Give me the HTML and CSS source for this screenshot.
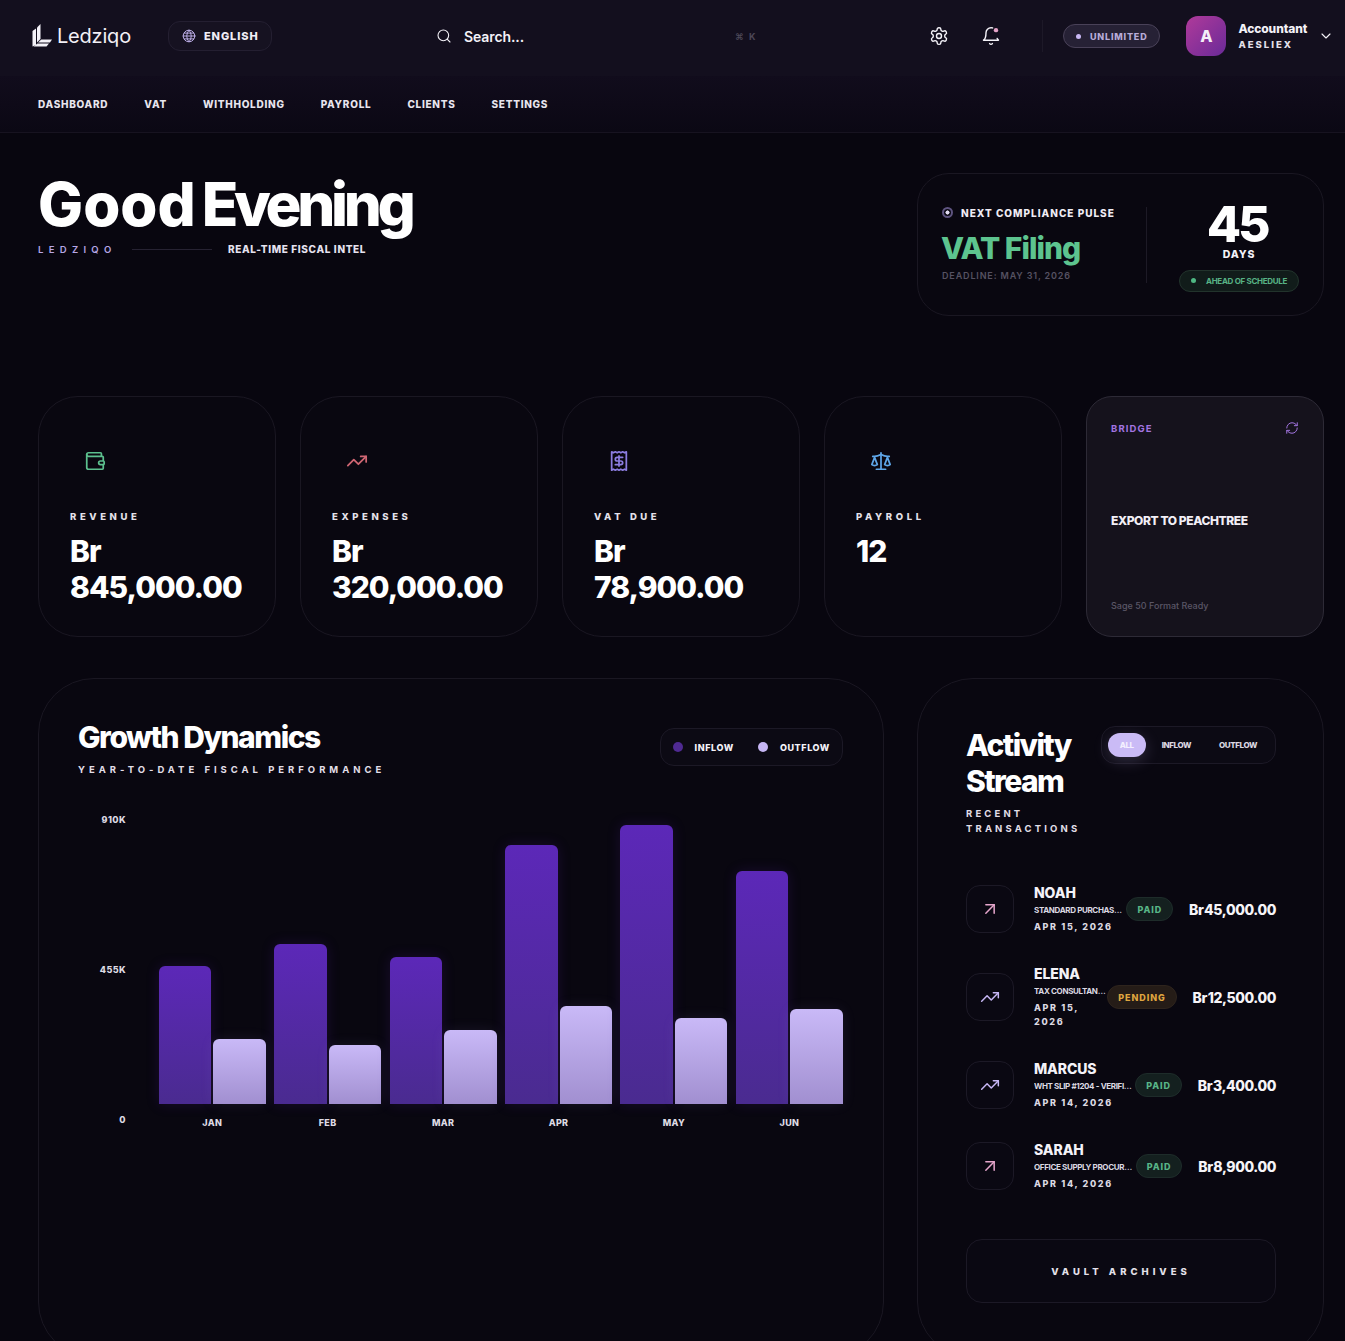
FILE: index.html
```html
<!DOCTYPE html>
<html lang="en">
<head>
<meta charset="utf-8">
<title>Ledziqo Dashboard</title>
<link rel="stylesheet" href="styles.css">
</head>
<body>
<div class="app">
  <header class="topbar">
    <div class="logo">
      <svg class="logo-mark" viewBox="0 0 20 24" aria-hidden="true">
        <path d="M0 7 3.5 4.5V21L0 22.5z"/><path d="M4.5 3.5 8 0V15L4.5 18.5z"/><path d="M8.8 15.5h10.7L17.5 18.5H5.5z"/><path d="M5 19.5h11.5L14 22.5H1z"/>
      </svg>
      <span class="logo-text">Ledziqo</span>
    </div>
    <button class="lang">
      <svg class="ic lang-ic" viewBox="0 0 24 24"><circle cx="12" cy="12" r="10"/><path d="M12 2a14.5 14.5 0 0 0 0 20 14.5 14.5 0 0 0 0-20"/><path d="M2 12h20M4 7h16M4 17h16"/></svg>
      <span>ENGLISH</span>
    </button>
    <div class="search">
      <svg class="ic search-ic" viewBox="0 0 24 24"><circle cx="11" cy="11" r="8"/><path d="m21 21-4.3-4.3"/></svg>
      <span class="search-text">Search...</span>
      <span class="kbd">⌘ K</span>
    </div>
    <div class="top-actions">
      <svg class="ic act-ic" viewBox="0 0 24 24"><path d="M12.22 2h-.44a2 2 0 0 0-2 2v.18a2 2 0 0 1-1 1.73l-.43.25a2 2 0 0 1-2 0l-.15-.08a2 2 0 0 0-2.73.73l-.22.38a2 2 0 0 0 .73 2.73l.15.1a2 2 0 0 1 1 1.72v.51a2 2 0 0 1-1 1.74l-.15.09a2 2 0 0 0-.73 2.73l.22.38a2 2 0 0 0 2.73.73l.15-.08a2 2 0 0 1 2 0l.43.25a2 2 0 0 1 1 1.73V20a2 2 0 0 0 2 2h.44a2 2 0 0 0 2-2v-.18a2 2 0 0 1 1-1.73l.43-.25a2 2 0 0 1 2 0l.15.08a2 2 0 0 0 2.73-.73l.22-.39a2 2 0 0 0-.73-2.73l-.15-.08a2 2 0 0 1-1-1.74v-.5a2 2 0 0 1 1-1.74l.15-.09a2 2 0 0 0 .73-2.73l-.22-.38a2 2 0 0 0-2.73-.73l-.15.08a2 2 0 0 1-2 0l-.43-.25a2 2 0 0 1-1-1.73V4a2 2 0 0 0-2-2z"/><circle cx="12" cy="12" r="3"/></svg>
      <svg class="ic act-ic" viewBox="0 0 24 24"><path d="M19.4 14.9C20.2 16.4 21 17 21 17H3s3-2 3-9c0-3.3 2.7-6 6-6 .7 0 1.3.1 1.9.3"/><path d="M10.3 21a1.94 1.94 0 0 0 3.4 0"/><circle class="bell-dot" cx="18" cy="5" r="2.6"/></svg>
    </div>
    <span class="top-divider"></span>
    <span class="plan"><i class="plan-dot"></i>UNLIMITED</span>
    <div class="user">
      <span class="avatar">A</span>
      <span class="user-info"><b>Accountant</b><small>AESLIEX</small></span>
      <svg class="ic chev" viewBox="0 0 24 24"><path d="m6 9 6 6 6-6"/></svg>
    </div>
  </header>

  <nav class="mainnav">
    <a>DASHBOARD</a><a>VAT</a><a>WITHHOLDING</a><a>PAYROLL</a><a>CLIENTS</a><a>SETTINGS</a>
  </nav>

  <main class="content">
    <section class="hero">
      <div class="greeting">
        <h1><span class="word-good">Good</span> <span class="word-evening">Evening</span></h1>
        <div class="greet-sub">
          <span class="brand-tag">LEDZIQO</span>
          <span class="greet-line"></span>
          <span class="greet-intel">REAL-TIME FISCAL INTEL</span>
        </div>
      </div>
      <aside class="pulse">
        <div class="pulse-main">
          <div class="pulse-label"><i class="pulse-dot"></i>NEXT COMPLIANCE PULSE</div>
          <div class="pulse-title">VAT Filing</div>
          <div class="pulse-deadline">DEADLINE: MAY 31, 2026</div>
        </div>
        <div class="pulse-count">
          <div class="count-num">45</div>
          <div class="count-unit">DAYS</div>
          <div class="count-badge"><i></i>AHEAD OF SCHEDULE</div>
        </div>
      </aside>
    </section>

    <section class="stats">
      <article class="stat">
        <svg class="ic stat-ic c-green" viewBox="0 0 24 24"><path d="M19 7V4a1 1 0 0 0-1-1H5a2 2 0 0 0 0 4h15a1 1 0 0 1 1 1v4h-3a2 2 0 0 0 0 4h3a1 1 0 0 0 1-1v-2a1 1 0 0 0-1-1"/><path d="M3 5v14a2 2 0 0 0 2 2h15a1 1 0 0 0 1-1v-4"/></svg>
        <div class="stat-label">REVENUE</div>
        <div class="stat-value">Br 845,000.00</div>
      </article>
      <article class="stat">
        <svg class="ic stat-ic c-red" viewBox="0 0 24 24"><path d="M22 7 13.5 15.5 8.5 10.5 2 17"/><path d="M16 7h6v6"/></svg>
        <div class="stat-label">EXPENSES</div>
        <div class="stat-value">Br 320,000.00</div>
      </article>
      <article class="stat">
        <svg class="ic stat-ic c-violet" viewBox="0 0 24 24"><path d="M4 2v20l2-1 2 1 2-1 2 1 2-1 2 1 2-1 2 1V2l-2 1-2-1-2 1-2-1-2 1-2-1-2 1Z"/><path d="M16 8h-6a2 2 0 1 0 0 4h4a2 2 0 1 1 0 4H8"/><path d="M12 17.5v-11"/></svg>
        <div class="stat-label">VAT DUE</div>
        <div class="stat-value">Br 78,900.00</div>
      </article>
      <article class="stat">
        <svg class="ic stat-ic c-blue" viewBox="0 0 24 24"><path d="m16 16 3-8 3 8c-.87.65-1.92 1-3 1s-2.13-.35-3-1Z"/><path d="m2 16 3-8 3 8c-.87.65-1.92 1-3 1s-2.13-.35-3-1Z"/><path d="M7 21h10"/><path d="M12 3v18"/><path d="M3 7h2c2 0 5-1 7-2 2 1 5 2 7 2h2"/></svg>
        <div class="stat-label">PAYROLL</div>
        <div class="stat-value">12</div>
      </article>
      <article class="bridge">
        <div class="bridge-top">
          <span class="bridge-tag">BRIDGE</span>
          <svg class="ic bridge-ic" viewBox="0 0 24 24"><path d="M3 12a9 9 0 0 1 9-9 9.75 9.75 0 0 1 6.74 2.74L21 8"/><path d="M21 3v5h-5"/><path d="M21 12a9 9 0 0 1-9 9 9.75 9.75 0 0 1-6.74-2.74L3 16"/><path d="M8 16H3v5"/></svg>
        </div>
        <div class="bridge-title">EXPORT TO PEACHTREE</div>
        <div class="bridge-foot">Sage 50 Format Ready</div>
      </article>
    </section>

    <section class="lower">
      <article class="panel growth">
        <div class="growth-head">
          <div>
            <h2>Growth Dynamics</h2>
            <p class="panel-sub">YEAR-TO-DATE FISCAL PERFORMANCE</p>
          </div>
          <div class="legend">
            <span><i class="dot-in"></i>INFLOW</span>
            <span><i class="dot-out"></i>OUTFLOW</span>
          </div>
        </div>
        <div class="chart">
          <div class="y-axis"><span>910K</span><span>455K</span><span>0</span></div>
          <div class="plot">
            <div class="bars">
              <div class="group"><div class="bar in" style="height:138px"></div><div class="bar out" style="height:65px"></div></div>
              <div class="group"><div class="bar in" style="height:160px"></div><div class="bar out" style="height:59px"></div></div>
              <div class="group"><div class="bar in" style="height:147px"></div><div class="bar out" style="height:74px"></div></div>
              <div class="group"><div class="bar in" style="height:259px"></div><div class="bar out" style="height:98px"></div></div>
              <div class="group"><div class="bar in" style="height:279px"></div><div class="bar out" style="height:86px"></div></div>
              <div class="group"><div class="bar in" style="height:233px"></div><div class="bar out" style="height:95px"></div></div>
            </div>
            <div class="x-axis"><span>JAN</span><span>FEB</span><span>MAR</span><span>APR</span><span>MAY</span><span>JUN</span></div>
          </div>
        </div>
      </article>

      <article class="panel activity">
        <div class="activity-head">
          <div class="activity-title">
            <h2>Activity Stream</h2>
            <p class="panel-sub">RECENT TRANSACTIONS</p>
          </div>
          <div class="tabs">
            <span class="tab active">ALL</span><span class="tab tab-in">INFLOW</span><span class="tab tab-out">OUTFLOW</span>
          </div>
        </div>
        <ul class="tx-list">
          <li class="tx">
            <span class="tx-ic"><svg class="ic c-pink" viewBox="0 0 24 24"><path d="M7 7h10v10"/><path d="M7 17 17 7"/></svg></span>
            <div class="tx-body"><b>NOAH</b><small>STANDARD PURCHASE ORDER</small><time>APR 15, 2026</time></div>
            <span class="tx-badge paid">PAID</span>
            <span class="tx-amt">Br 45,000.00</span>
          </li>
          <li class="tx">
            <span class="tx-ic"><svg class="ic c-lav" viewBox="0 0 24 24"><path d="M22 7 13.5 15.5 8.5 10.5 2 17"/><path d="M16 7h6v6"/></svg></span>
            <div class="tx-body"><b>ELENA</b><small>TAX CONSULTANCY RETAINER</small><time>APR 15, 2026</time></div>
            <span class="tx-badge pending">PENDING</span>
            <span class="tx-amt">Br 12,500.00</span>
          </li>
          <li class="tx">
            <span class="tx-ic"><svg class="ic c-lav" viewBox="0 0 24 24"><path d="M22 7 13.5 15.5 8.5 10.5 2 17"/><path d="M16 7h6v6"/></svg></span>
            <div class="tx-body"><b>MARCUS</b><small>WHT SLIP #1204 - VERIFIED PAYMENT</small><time>APR 14, 2026</time></div>
            <span class="tx-badge paid">PAID</span>
            <span class="tx-amt">Br 3,400.00</span>
          </li>
          <li class="tx">
            <span class="tx-ic"><svg class="ic c-pink" viewBox="0 0 24 24"><path d="M7 7h10v10"/><path d="M7 17 17 7"/></svg></span>
            <div class="tx-body"><b>SARAH</b><small>OFFICE SUPPLY PROCUREMENT</small><time>APR 14, 2026</time></div>
            <span class="tx-badge paid">PAID</span>
            <span class="tx-amt">Br 8,900.00</span>
          </li>
        </ul>
        <button class="vault">VAULT ARCHIVES</button>
      </article>
    </section>
  </main>
</div>
</body>
</html>
```
FILE: styles.css
```css
* { box-sizing: border-box; margin: 0; padding: 0; }
html, body { height: 100%; overflow: hidden; background: #08060f; }
body { font-family: Inter, "Liberation Sans", sans-serif; color: #f4f2f8; }
.app { height: 1341px; overflow: hidden; background: #08060f; }
.ic { fill: none; stroke: currentColor; stroke-width: 2; stroke-linecap: round; stroke-linejoin: round; flex: none; }
ul { list-style: none; }
i { display: block; font-style: normal; }

/* top bar */
.topbar { height: 76px; display: flex; align-items: center; padding: 0 0 4px 32px; background: #130f1e; }
.topbar > * { flex: none; }
.logo { display: flex; align-items: center; gap: 4px; width: 136px; }
.logo-mark { width: 21px; height: 24px; fill: #f4f2f8; }
.logo-text { font-size: 20px; font-weight: 400; letter-spacing: -0.2px; color: #f2f0f6; }
.lang { display: flex; align-items: center; gap: 8px; height: 30px; width: 104px; padding: 0 13px; border: 1px solid #241f31; border-radius: 12px; background: #161221; color: #f0edf6; font: 800 11px Inter, sans-serif; letter-spacing: 0.9px; }
.lang-ic { width: 14px; height: 14px; stroke-width: 1.6; color: #c4b5f0; }
.search { display: flex; align-items: center; margin-left: 164px; width: 321px; }
.search-ic { width: 16px; height: 16px; stroke-width: 1.6; color: #f4f2f8; }
.search-text { margin-left: 12px; font-size: 14px; font-weight: 600; letter-spacing: -0.1px; flex: 1; }
.kbd { font-size: 9px; font-weight: 700; letter-spacing: 1.6px; color: #4c4757; }
.top-actions { display: flex; gap: 32px; margin-left: 172px; }
.act-ic { width: 20px; height: 20px; stroke-width: 1.7; }
.bell-dot { fill: #e6a4c8; stroke: none; }
.top-divider { width: 1px; height: 32px; background: #1d1928; margin-left: 41px; }
.plan { display: flex; align-items: center; gap: 9px; height: 24px; margin-left: 20px; padding: 0 12px; border: 1px solid #494158; border-radius: 12px; background: #262135; color: #b7abd8; font-size: 9px; font-weight: 800; letter-spacing: 0.8px; }
.plan-dot { width: 5px; height: 5px; border-radius: 50%; background: #c9b8f5; }
.user { display: flex; align-items: center; margin-left: 26px; }
.avatar { width: 40px; height: 40px; border-radius: 12px; background: linear-gradient(135deg, #b03a9a, #6a2a98); display: flex; align-items: center; justify-content: center; font-size: 16px; font-weight: 800; color: #f4eef8; }
.user-info { display: flex; flex-direction: column; margin-left: 12px; }
.user-info b { font-size: 12px; font-weight: 800; letter-spacing: -0.1px; line-height: 16px; }
.user-info small { font-size: 9.5px; font-weight: 800; letter-spacing: 2px; line-height: 15px; color: #e4e0ea; }
.chev { width: 16px; height: 16px; margin-left: 11px; stroke-width: 1.7; }

/* main nav */
.mainnav { height: 57px; display: flex; align-items: center; gap: 36px; padding-left: 38px; background: linear-gradient(180deg, #110c1c, #0b0814); border-bottom: 1px solid #171320; }
.mainnav a { font-size: 10px; font-weight: 800; letter-spacing: 0.72px; color: #e8e5ee; }

/* content */
.content { padding: 40px 21px 0 38px; }
.hero { height: 143px; display: flex; justify-content: space-between; }
.greeting h1 { font-size: 60px; line-height: 64px; font-weight: 800; color: #fff; margin-top: -1px; word-spacing: -7px; white-space: nowrap; }
.word-good { letter-spacing: 0; }
.word-evening { letter-spacing: -4.35px; }
.greet-sub { display: flex; align-items: center; margin-top: 5px; height: 16px; }
.brand-tag { width: 94px; font-size: 9.5px; font-weight: 600; letter-spacing: 5.3px; color: #b6a6e6; }
.greet-line { width: 80px; height: 1px; background: #262232; }
.greet-intel { margin-left: 16px; font-size: 10px; font-weight: 800; letter-spacing: 0.65px; color: #e6e2ef; }

.pulse { width: 407px; border: 1px solid #1a1722; border-radius: 32px; background: #090710; display: flex; align-items: center; padding: 0 24px; }
.pulse-main { flex: none; width: 205px; height: 76px; border-right: 1px solid #1d1a26; }
.pulse-label { display: flex; align-items: center; gap: 8px; font-size: 10px; font-weight: 800; letter-spacing: 1px; color: #efecf4; line-height: 14px; margin-top: -1px; }
.pulse-dot { width: 11px; height: 11px; border-radius: 50%; border: 2px solid #5e5480; background: radial-gradient(circle, #e2dcf2 0 1.8px, #0a0812 2.3px); }
.pulse-title { font-size: 30px; line-height: 36px; font-weight: 800; letter-spacing: -1px; color: #5dc48f; margin: 10px 0 0 -1px; }
.pulse-deadline { font-size: 9px; font-weight: 600; letter-spacing: 0.85px; color: #565262; margin-top: 4px; }
.pulse-count { flex: none; width: 120px; margin-left: 32px; display: flex; flex-direction: column; align-items: center; }
.count-num { font-size: 50px; line-height: 50px; font-weight: 800; letter-spacing: -3.2px; color: #fff; margin: 1px 0 0 -4px; }
.count-unit { font-size: 10.5px; line-height: 13px; font-weight: 800; letter-spacing: 0.8px; margin-top: -1px; }
.count-badge { display: flex; align-items: center; gap: 10px; height: 22px; width: 120px; margin-top: 9px; padding: 0 11px; border: 1px solid #22332c; border-radius: 11px; background: #111c1a; color: #58b386; font-size: 8px; font-weight: 700; letter-spacing: -0.3px; white-space: nowrap; }
.count-badge i { flex: none; width: 5px; height: 5px; border-radius: 50%; background: #4fb883; }

/* stats */
.stats { display: grid; grid-template-columns: repeat(5, 238px); gap: 24px; margin-top: 80px; height: 241px; }
.stat { border: 1px solid #1a1722; border-radius: 40px; background: #090710; padding: 53px 31px 0; }
.stat-ic { display: block; width: 22px; height: 22px; stroke-width: 1.9; margin-left: 14px; }
.c-green { color: #5cc08e; }
.c-red { color: #cf6673; }
.c-violet { color: #8c7de0; }
.c-blue { color: #5ea6e8; }
.c-pink { color: #e6a6cc; }
.c-lav { color: #c6b6f4; }
.stat-label { margin-top: 39px; font-size: 9.5px; font-weight: 800; letter-spacing: 3.6px; color: #e4e1ea; line-height: 12px; }
.stat-value { margin-top: 10px; font-size: 30px; line-height: 36px; font-weight: 800; letter-spacing: -1px; color: #fff; }
.bridge { border: 1px solid #2d2a36; border-radius: 26px; background: #15121c; padding: 24px 24px 0; display: flex; flex-direction: column; }
.bridge-top { display: flex; justify-content: space-between; align-items: center; height: 14px; }
.bridge-tag { font-size: 9.5px; font-weight: 700; letter-spacing: 1.1px; color: #a274e0; }
.bridge-ic { width: 14px; height: 14px; color: #a274e0; stroke-width: 1.7; }
.bridge-title { margin-top: 78px; font-size: 12px; line-height: 16px; font-weight: 800; letter-spacing: -0.4px; color: #f2eff6; }
.bridge-foot { margin-top: 71px; font-size: 9px; font-weight: 500; color: #5a5666; }

/* lower panels */
.lower { display: grid; grid-template-columns: 846px 407px; gap: 33px; margin-top: 41px; }
.panel { border: 1px solid #1a1722; border-radius: 56px; background: #090710; height: 680px; }
.panel h2 { font-weight: 800; color: #fff; }
.panel-sub { font-size: 9.5px; font-weight: 700; color: #e2dfe8; }

.growth { padding: 40px 40px 0 39px; }
.growth-head { display: flex; justify-content: space-between; align-items: flex-start; }
.growth h2 { font-size: 30px; line-height: 36px; letter-spacing: -1.48px; }
.growth .panel-sub { margin-top: 9px; line-height: 12px; letter-spacing: 3.98px; }
.legend { display: flex; align-items: center; gap: 24px; height: 38px; margin-top: 9px; padding: 0 12px; border: 1px solid #1c1926; border-radius: 14px; background: #0c0a14; font-size: 9px; font-weight: 800; letter-spacing: 0.6px; }
.legend span { display: flex; align-items: center; gap: 12px; }
.legend i { width: 10px; height: 10px; border-radius: 50%; }
.dot-in { background: #4f2a92; }
.dot-out { background: #c6b6f4; }

.chart { display: flex; margin-top: 42px; }
.y-axis { width: 48px; height: 312px; margin-top: -4px; display: flex; flex-direction: column; justify-content: space-between; align-items: flex-end; font-size: 9px; font-weight: 800; letter-spacing: 0.4px; color: #dedbe4; line-height: 12px; }
.plot { margin-left: 32.7px; width: 684.6px; }
.bars { height: 286px; display: flex; justify-content: space-between; align-items: flex-end; }
.group { width: 107px; display: flex; gap: 2px; align-items: flex-end; }
.bar { flex: 1; border-radius: 6px 6px 0 0; }
.bar.in { background: linear-gradient(180deg, #5c28b8, #4a2b90); box-shadow: 0 0 14px rgba(92, 40, 184, .18); }
.bar.out { background: linear-gradient(180deg, #c9b9f7, #a18fd0); box-shadow: 0 0 14px rgba(180, 160, 240, .1); }
.x-axis { display: flex; justify-content: space-between; margin-top: 13px; font-size: 9px; font-weight: 800; letter-spacing: 0.3px; color: #dedbe4; line-height: 12px; }
.x-axis span { width: 107px; text-align: center; }

.activity { padding: 48px 47px 0 48px; }
.activity-head { display: flex; justify-content: space-between; align-items: flex-start; height: 157px; }
.activity-title { width: 130px; }
.activity h2 { font-size: 30px; line-height: 36px; letter-spacing: -1.6px; margin-top: 0; }
.activity .panel-sub { margin-top: 7px; line-height: 15px; letter-spacing: 3.15px; }
.tabs { display: flex; align-items: center; height: 38px; margin-top: -1px; padding: 0 6px; border: 1px solid #1c1926; border-radius: 14px; background: #0c0a14; }
.tab { font-size: 8px; font-weight: 800; letter-spacing: -0.4px; color: #dcd9e2; height: 24px; display: flex; align-items: center; justify-content: center; border-radius: 12px; }
.tab-in { padding: 0 14px 0 16px; }
.tab-out { padding: 0 12px 0 14px; }
.tab.active { width: 38px; background: #cabbf6; color: #f4f0ff; box-shadow: 0 4px 16px rgba(202, 187, 246, .2); }

.tx-list { display: flex; flex-direction: column; gap: 31px; }
.tx { display: flex; align-items: center; }
.tx-ic { flex: none; width: 48px; height: 48px; border: 1px solid #1c1926; border-radius: 14px; background: #0a0812; display: flex; align-items: center; justify-content: center; }
.tx-ic .ic { width: 20px; height: 20px; stroke-width: 1.8; }
.tx-body { flex: 1 1 0; min-width: 0; margin-left: 20px; display: flex; flex-direction: column; }
.tx-body b { font-size: 14px; line-height: 17px; font-weight: 800; letter-spacing: -0.1px; }
.tx-body small { font-size: 8px; line-height: 16px; font-weight: 700; letter-spacing: -0.35px; white-space: nowrap; overflow: hidden; text-overflow: ellipsis; color: #dcd9e2; margin-top: 1px; }
.tx-body time { font-size: 9px; line-height: 14px; font-weight: 800; letter-spacing: 1.65px; margin-top: 2px; color: #dcd9e2; }
.tx-badge { flex: none; height: 24px; display: flex; align-items: center; padding: 0 10px; border-radius: 12px; font-size: 9px; font-weight: 800; letter-spacing: 0.9px; }
.paid { background: #14201f; border: 1px solid #1e2c2a; color: #58b587; }
.pending { background: #251c17; border: 1px solid #2e241d; color: #dfa53f; }
.tx-amt { flex: none; margin: 0 0 0 16px; font-size: 14px; font-weight: 800; letter-spacing: -0.4px; word-spacing: -2px; color: #f6f4f8; }
.vault { display: block; width: 100%; height: 64px; margin-top: 48px; border: 1px solid #1c1926; border-radius: 16px; background: #0a0812; color: #e4e1ea; font: 800 9.5px Inter, sans-serif; letter-spacing: 4px; }
```
